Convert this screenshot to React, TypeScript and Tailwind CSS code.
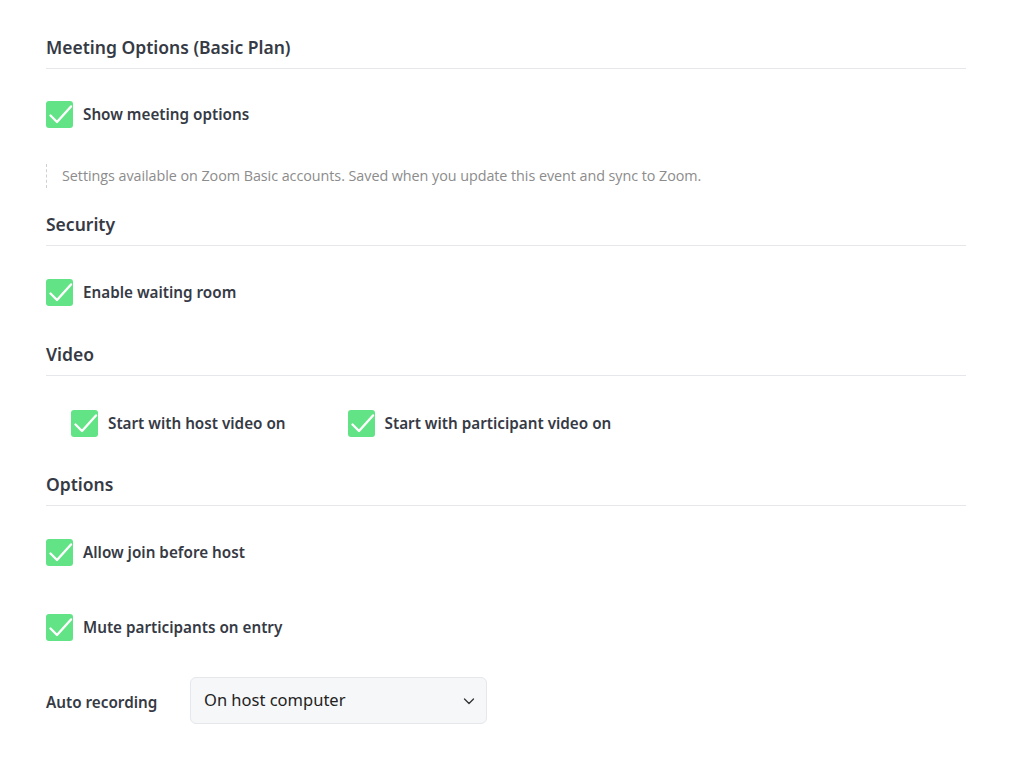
import React from "react";

function Check({ label }: { label: string }) {
  return (
    <div className="flex items-center gap-[10px]">
      <div className="w-[27px] h-[27px] rounded-[3px] bg-[#62e386] flex items-center justify-center shrink-0">
        <svg width="27" height="27" viewBox="0 0 27 27" fill="none">
          <path d="M4.5 14.5 L11 21 L25 5.5" stroke="white" strokeWidth="2.4" strokeLinecap="round" strokeLinejoin="round" />
        </svg>
      </div>
      <span className="text-[15.25px] font-semibold text-[#363a45]">{label}</span>
    </div>
  );
}

function Heading({ children }: { children: React.ReactNode }) {
  return (
    <div className="border-b border-[#e6e7ea] pb-[9px]">
      <h2 className="text-[17.5px] font-semibold text-[#363a45] leading-[24px]">{children}</h2>
    </div>
  );
}

export default function App() {
  return (
    <div className="min-h-[757px] bg-white px-[46px] pt-[35px] w-[1011px]" style={{ fontFamily: '"Noto Sans", "Open Sans", sans-serif' }}>
      <div className="w-[920px]">
        <div className="-mb-[1px]">
          <Heading>Meeting Options (Basic Plan)</Heading>
        </div>
        <div className="mt-[33px]">
          <Check label="Show meeting options" />
        </div>
        <div className="mt-[36px] border-l border-dashed border-[#d0d0d0] pl-[15px] py-[2px]">
          <p className="text-[14.35px] text-[#8c8c8c] leading-[20px]" style={{ fontFamily: '"Open Sans", sans-serif', letterSpacing: "-0.05px" }}>
            Settings available on Zoom Basic accounts. Saved when you update this event and sync to Zoom.
          </p>
        </div>
        <div className="mt-[24px]">
          <Heading>Security</Heading>
        </div>
        <div className="mt-[33px]">
          <Check label="Enable waiting room" />
        </div>
        <div className="mt-[36px]">
          <Heading>Video</Heading>
        </div>
        <div className="mt-[34px] pl-[25px] flex gap-[62px]">
          <Check label="Start with host video on" />
          <Check label="Start with participant video on" />
        </div>
        <div className="mt-[35px]">
          <Heading>Options</Heading>
        </div>
        <div className="mt-[33px]">
          <Check label="Allow join before host" />
        </div>
        <div className="mt-[48px]">
          <Check label="Mute participants on entry" />
        </div>
        <div className="mt-[36px] flex items-center">
          <span className="w-[144px] text-[15.25px] font-semibold text-[#363a45] pt-[4px]">Auto recording</span>
          <div className="w-[297px] h-[47px] rounded-[6px] border border-[#e5e7eb] bg-[#f6f7f9] flex items-center justify-between pl-[13px] pr-[10px]">
            <span className="text-[16.5px] text-[#222]">On host computer</span>
            <svg width="14" height="14" viewBox="0 0 14 14" fill="none">
              <path d="M2.5 5 L7 9.5 L11.5 5" stroke="#333" strokeWidth="1.3" strokeLinecap="round" strokeLinejoin="round" />
            </svg>
          </div>
        </div>
      </div>
    </div>
  );
}
